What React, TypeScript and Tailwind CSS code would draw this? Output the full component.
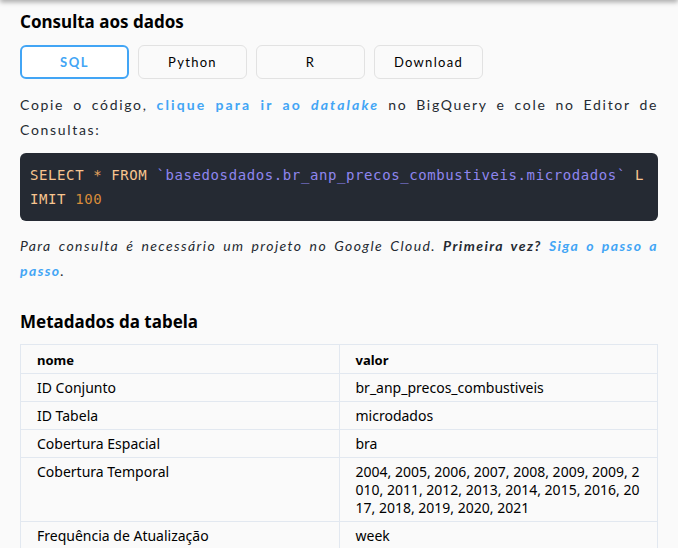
import React from "react";

const tabs = ["SQL", "Python", "R", "Download"];

const rows: [string, React.ReactNode][] = [
  ["ID Conjunto", "br_anp_precos_combustiveis"],
  ["ID Tabela", "microdados"],
  ["Cobertura Espacial", "bra"],
  [
    "Cobertura Temporal",
    "2004, 2005, 2006, 2007, 2008, 2009, 2009, 2010, 2011, 2012, 2013, 2014, 2015, 2016, 2017, 2018, 2019, 2020, 2021",
  ],
  ["Frequência de Atualização", "week"],
];

export default function App() {
  return (
    <div className="relative h-[548px] w-[678px] overflow-hidden bg-[#fafafa] font-['Lato',sans-serif] text-[#252a32]">
      {/* shadow from the header above */}
      <div className="absolute left-0 right-0 top-[-6px] h-[6px] shadow-[0_2px_5px_rgba(0,0,0,0.35)]" />

      <section className="flex flex-col px-5 pt-[10px]">
        <h2 className="font-['Noto_Sans',sans-serif] text-[17px] font-bold leading-6 text-black">Consulta aos dados</h2>

        <div className="mt-[11px] flex gap-[9px]">
          {tabs.map((tab, i) => (
            <button
              key={tab}
              type="button"
              className={
                i === 0
                  ? "h-[34px] w-[109px] rounded-md border-2 border-[#42a5f5] bg-white pt-[2px] text-[13px] font-bold tracking-[0.12em] text-[#42a5f5]"
                  : "h-[34px] w-[109px] rounded-md border border-[#e2e2e2] bg-[#fafafa] pt-[2px] text-[13px] tracking-[0.1em] text-black"
              }
            >
              {tab}
            </button>
          ))}
        </div>

        <p className="mt-[13px] text-justify text-[14px] leading-[25px] tracking-[0.12em] text-[#252a32]">
          Copie o código,{" "}
          <a className="font-bold tracking-[0.15em] text-[#42a5f5]">
            clique para ir ao <i>datalake</i>
          </a>{" "}
          no BigQuery e cole no Editor de Consultas:
        </p>

        <pre className="mt-[11px] whitespace-pre-wrap break-all rounded-md bg-[#252a33] py-[10px] pl-[10px] pr-[10px] font-['DejaVu_Sans_Mono',monospace] text-[14px] leading-6 tracking-[0.6px] text-[#f8c58f]">
          SELECT <span className="text-[#e8a55e]">*</span> FROM{" "}
          <span className="text-[#8f86ef]">`basedosdados.br_anp_precos_combustiveis.microdados`</span> LIMIT{" "}
          <span className="text-[#d98b3a]">100</span>
        </pre>

        <p className="mt-[12px] text-justify text-[14px] italic leading-[25px] tracking-[0.1em] text-[#252a32]">
          Para consulta é necessário um projeto no Google Cloud. <b>Primeira vez?</b>{" "}
          <a className="font-bold text-[#42a5f5]">Siga o passo a passo</a>.
        </p>

        <h2 className="mt-[27px] font-['Noto_Sans',sans-serif] text-[17px] font-bold leading-6 text-black">
          Metadados da tabela
        </h2>

        <table className="mt-[10px] w-full table-fixed border-collapse font-['Noto_Sans',sans-serif] text-[14px] leading-[18px] text-black">
          <thead>
            <tr>
              <th className="w-1/2 border border-[#e2e8f0] px-4 pb-[4px] pt-[6px] text-left text-[13px] font-bold">nome</th>
              <th className="border border-[#e2e8f0] px-4 pb-[4px] pt-[6px] text-left text-[13px] font-bold">valor</th>
            </tr>
          </thead>
          <tbody>
            {rows.map(([k, v]) => (
              <tr key={k}>
                <td className="border border-[#e2e8f0] px-4 pb-[4px] pt-[5px] align-top">{k}</td>
                <td className="break-all border border-[#e2e8f0] px-4 pb-[4px] pt-[5px] align-top">{v}</td>
              </tr>
            ))}
          </tbody>
        </table>
      </section>
    </div>
  );
}
